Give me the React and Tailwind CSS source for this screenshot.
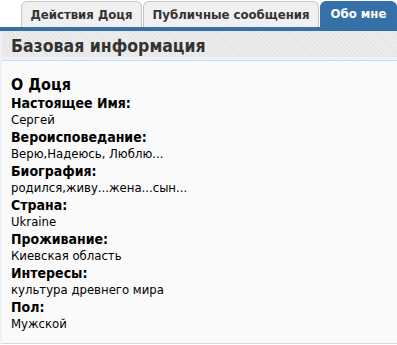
const tabs = [
  { label: 'Действия Доця', w: 'w-[121px]', active: false },
  { label: 'Публичные сообщения', w: 'w-[176px]', active: false },
  { label: 'Обо мне', w: 'w-[77px]', active: true },
];

const fields = [
  ['Настоящее Имя:', 'Сергей'],
  ['Вероисповедание:', 'Верю,Надеюсь, Люблю...'],
  ['Биография:', 'родился,живу...жена...сын...'],
  ['Страна:', 'Ukraine'],
  ['Проживание:', 'Киевская область'],
  ['Интересы:', 'культура древнего мира'],
  ['Пол:', 'Мужской'],
];

export default function App() {
  return (
    <div className="w-[397px] h-[345px] bg-white font-['DejaVu_Sans_Condensed','DejaVu_Sans',sans-serif] overflow-hidden">
      {/* Tabs */}
      <div className="flex items-end gap-px pl-[21px] h-[27px]">
        {tabs.map((t) => (
          <div
            key={t.label}
            className={
              t.active
                ? `${t.w} h-[26px] shrink-0 flex items-center justify-center whitespace-nowrap rounded-t-[6px] bg-[#3670a8] text-white text-[13px] font-bold`
                : `${t.w} h-[26px] shrink-0 flex items-center justify-center whitespace-nowrap rounded-t-[6px] border border-b-0 border-[#c6c6c6] bg-[#f0f0f0] text-[#333] text-[13px] font-bold`
            }
          >
            {t.label}
          </div>
        ))}
      </div>
      <div className="h-[4px] bg-[#3670a8]" />

      {/* Panel */}
      <div className="h-[313px] border-b border-[#c8dcef] border-l-2 border-l-[#eef2f6] bg-[#fafafa]">
        <div className="h-[26px] flex items-center px-[9px] bg-[repeating-linear-gradient(45deg,#e4e4e4_0px,#e4e4e4_1px,#ececec_1px,#ececec_3px)]">
          <h2 className="text-[17.5px] font-bold text-[#333] pt-[4px]">Базовая информация</h2>
        </div>
        <div className="h-[3px] bg-[#eef2f6]" />
        <div className="border-t border-[#c8dcef] px-[9px] pt-[14px] text-black">
          <h3 className="text-[16px] font-bold leading-[19px]">О Доця</h3>
          {fields.map(([k, v]) => (
            <div key={k}>
              <div className="text-[14px] font-bold leading-[18px]">{k}</div>
              <div className="text-[13px] leading-[16px]">{v}</div>
            </div>
          ))}
        </div>
      </div>
    </div>
  );
}
